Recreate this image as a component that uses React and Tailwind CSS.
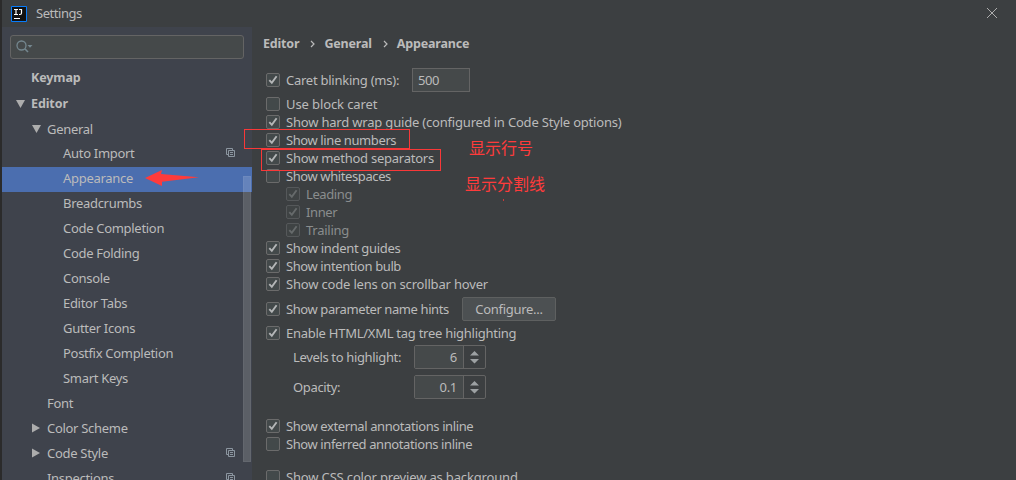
const tree = [
  { label: 'Keymap', level: 0, bold: true },
  { label: 'Editor', level: 0, bold: true, arrow: 'down' },
  { label: 'General', level: 1, arrow: 'down' },
  { label: 'Auto Import', level: 2, copy: true },
  { label: 'Appearance', level: 2, selected: true },
  { label: 'Breadcrumbs', level: 2 },
  { label: 'Code Completion', level: 2 },
  { label: 'Code Folding', level: 2 },
  { label: 'Console', level: 2 },
  { label: 'Editor Tabs', level: 2 },
  { label: 'Gutter Icons', level: 2 },
  { label: 'Postfix Completion', level: 2 },
  { label: 'Smart Keys', level: 2 },
  { label: 'Font', level: 1 },
  { label: 'Color Scheme', level: 1, arrow: 'right' },
  { label: 'Code Style', level: 1, arrow: 'right', copy: true },
  { label: 'Inspections', level: 1, copy: true },
];

const indents = ['pl-[13px]', 'pl-[29px]', 'pl-[45px]'];

const TreeArrow = ({ direction }) => (
  <svg width="16" height="12" viewBox="0 0 16 12" className="shrink-0" fill="#adadad">
    {direction === 'down' && <path d="M1 2H10L5.5 10Z" />}
    {direction === 'right' && <path d="M1 1.5V10.5L9 6Z" />}
  </svg>
);

const CopyIcon = () => (
  <svg width="10" height="10" viewBox="0 0 10 10" fill="none" stroke="#8c96a0" className="mr-4 ml-auto shrink-0">
    <path d="M2 6.5H.5V.5H6.5V2" />
    <path d="M2.5 2.5H8.5V8.5H2.5ZM4 4.5H7M4 6.5H7" />
  </svg>
);

const TreeRow = ({ item }) => (
  <div
    className={`flex h-[25px] shrink-0 items-center ${item.arrow === 'down' ? 'pb-[2px]' : 'pb-[3px]'} ${
      indents[item.level]
    } ${item.selected ? 'bg-[#4b6eaf]' : ''}`}
  >
    <TreeArrow direction={item.arrow} />
    <span className={item.bold ? 'text-[12.5px] font-bold tracking-[-0.1px]' : 'tracking-[-0.3px]'}>
      {item.label}
    </span>
    {item.copy && <CopyIcon />}
  </div>
);

const Sidebar = () => (
  <aside className="relative flex w-[250px] shrink-0 flex-col overflow-hidden bg-[#3f434c]">
    <div className="mx-2 mt-2 flex h-6 shrink-0 items-center rounded-[3px] border border-[#646464] bg-[#45494a] pl-[5px]">
      <svg width="18" height="14" viewBox="0 0 18 14" fill="none" stroke="#74878f">
        <circle cx="5.5" cy="5.5" r="4.5" strokeWidth="1.3" />
        <path d="M8.8 8.8L12 12" strokeWidth="1.6" />
        <path d="M11.5 5H16.5L14 7.8Z" fill="#74878f" stroke="none" />
      </svg>
    </div>
    <nav className="mt-2 flex flex-col">
      {tree.map((item) => (
        <TreeRow key={item.label} item={item} />
      ))}
    </nav>
    <div className="absolute top-[149px] right-[1px] h-[286px] w-2 border border-white/5 bg-white/15" />
  </aside>
);

const Checkbox = ({ checked, disabled }) => (
  <span
    className={`flex size-[14px] shrink-0 items-center justify-center rounded-[2px] border ${
      disabled ? 'border-[#55585a] bg-[#3f4344]' : 'border-[#6b6b6b] bg-[#43494a]'
    }`}
  >
    {checked && (
      <svg width="12" height="12" viewBox="0 0 12 12" fill="none" stroke={disabled ? '#666a6b' : '#b4b6b7'}>
        <path d="M2.3 6.2L4.8 8.8L9.6 2.2" strokeWidth="1.9" />
      </svg>
    )}
  </span>
);

const Option = ({ label, checked, disabled, className = 'h-[18px]', tracking = 'tracking-[-0.4px]', children }) => (
  <div className={`flex shrink-0 items-center ${disabled ? 'ml-5 text-[#8a8d8e]' : ''} ${className}`}>
    <Checkbox checked={checked} disabled={disabled} />
    <span className={`ml-1.5 ${tracking}`}>{label}</span>
    {children}
  </div>
);

const Spinner = ({ label, value }) => (
  <div className="flex h-[30px] shrink-0 items-center pl-[27px]">
    <span className="w-[121px] tracking-[-0.35px]">{label}</span>
    <div className="flex h-6 w-[72px] rounded-[2px] border border-[#646464]">
      <span className="flex w-[49px] items-center justify-end border-r border-[#646464] bg-[#45494a] pr-[6px] tracking-[-0.3px]">
        {value}
      </span>
      <svg width="21" height="22" viewBox="0 0 21 22" fill="#9da1a3">
        <path d="M6 9.5H15L10.5 5ZM6 13H15L10.5 17.5Z" />
      </svg>
    </div>
  </div>
);

const Breadcrumb = () => (
  <div className="-ml-[3px] flex h-6 shrink-0 items-center text-[12.5px] font-bold tracking-[-0.18px]">
    {['Editor', 'General', 'Appearance'].map((part, i) => (
      <span key={part} className="flex items-center">
        {i > 0 && (
          <svg width="5" height="8" viewBox="0 0 5 8" fill="none" stroke="#bbbbbb" className="mr-[9px] ml-[11px]">
            <path d="M1 1L4 4L1 7" strokeWidth="1.2" />
          </svg>
        )}
        {part}
      </span>
    ))}
  </div>
);

const Annotations = () => (
  <div className="pointer-events-none absolute inset-0 font-['Noto_Sans_CJK_SC',sans-serif] text-[16px] leading-6 text-[#ff3b3b]">
    <div className="absolute top-[129px] left-[244px] h-5 w-[166px] border border-[#f93838]" />
    <div className="absolute top-[149px] left-[261px] h-[22px] w-[180px] border border-[#f93838]" />
    <span className="absolute top-[135px] left-[469px]">显示行号</span>
    <span className="absolute top-[171px] left-[465px]">显示分割线</span>
    <div className="absolute top-[199px] left-[503px] h-[2px] w-px bg-[#c93a3a]" />
    <svg width="54" height="18" viewBox="0 0 54 18" fill="#ff3b3b" className="absolute top-[169px] left-[145px]">
      <path d="M0 9L17 1L16 5L54 8.3L17 12.8V17Z" />
    </svg>
  </div>
);

const App = () => {
  return (
    <div className="relative flex h-[480px] w-[1016px] flex-col overflow-hidden border-l-2 border-[#2b2b2b] bg-[#3c3f41] font-['Noto_Sans',sans-serif] text-[13px] leading-[18px] whitespace-nowrap text-[#bbbbbb]">
      <header className="flex h-[27px] shrink-0 items-center pl-[9px]">
        <svg width="16" height="16" viewBox="0 0 16 16" fill="none">
          <path d="M.5.5H15.5V15.5H.5Z" fill="#111111" stroke="#087cfa" />
          <path
            d="M3 3.5H7M5 3.5V8.5M3 8.5H7M8 3.5H10.5V7Q10.5 8.5 9 8.5H8M3 12.5H9"
            stroke="#ffffff"
            strokeWidth="1.2"
          />
        </svg>
        <span className="mb-px ml-[9px] tracking-[-0.45px]">Settings</span>
        <svg width="10" height="10" viewBox="0 0 10 10" stroke="#adadad" className="mr-[19px] mb-px ml-auto">
          <path d="M0 0L10 10M10 0L0 10" />
        </svg>
      </header>
      <div className="flex min-h-0 flex-1">
        <Sidebar />
        <main className="flex min-w-0 flex-1 flex-col overflow-hidden pt-[5px] pl-[14px]">
          <Breadcrumb />
          <Option
            label="Caret blinking (ms):"
            checked
            className="mt-[11px] h-[26px]"
            tracking="w-[126px] tracking-[-0.25px]"
          >
            <span className="flex h-6 w-[58px] items-center border border-[#646464] bg-[#45494a] pl-[5px] tracking-[-0.4px]">
              500
            </span>
          </Option>
          <Option label="Use block caret" className="mt-[2px] h-[18px]" tracking="tracking-[-0.1px]" />
          <Option
            label="Show hard wrap guide (configured in Code Style options)"
            checked
            tracking="tracking-[-0.19px]"
          />
          <Option label="Show line numbers" checked />
          <Option label="Show method separators" checked tracking="tracking-[-0.24px]" />
          <Option label="Show whitespaces" />
          <Option label="Leading" checked disabled />
          <Option label="Inner" checked disabled />
          <Option label="Trailing" checked disabled tracking="tracking-[-0.25px]" />
          <Option label="Show indent guides" checked tracking="tracking-[-0.32px]" />
          <Option label="Show intention bulb" checked />
          <Option label="Show code lens on scrollbar hover" checked tracking="tracking-[-0.18px]" />
          <Option
            label="Show parameter name hints"
            checked
            className="mt-1 h-6"
            tracking="w-[176px] tracking-[-0.4px]"
          >
            <button className="h-6 w-[94px] rounded-[2px] border border-[#5e6060] bg-[#4c5052] tracking-[-0.3px]">
              Configure...
            </button>
          </Option>
          <Option
            label="Enable HTML/XML tag tree highlighting"
            checked
            className="mt-[3px] h-[18px]"
            tracking="tracking-[-0.26px]"
          />
          <Spinner label="Levels to highlight:" value="6" />
          <Spinner label="Opacity:" value="0.1" />
          <Option label="Show external annotations inline" checked className="mt-[15px] h-[18px]" />
          <Option label="Show inferred annotations inline" />
          <Option
            label="Show CSS color preview as background"
            className="mt-[15px] h-[18px]"
            tracking="tracking-[-0.16px]"
          />
        </main>
      </div>
      <div className="absolute inset-y-0 -left-[2px] w-full">
        <Annotations />
      </div>
    </div>
  );
};

export default App;
